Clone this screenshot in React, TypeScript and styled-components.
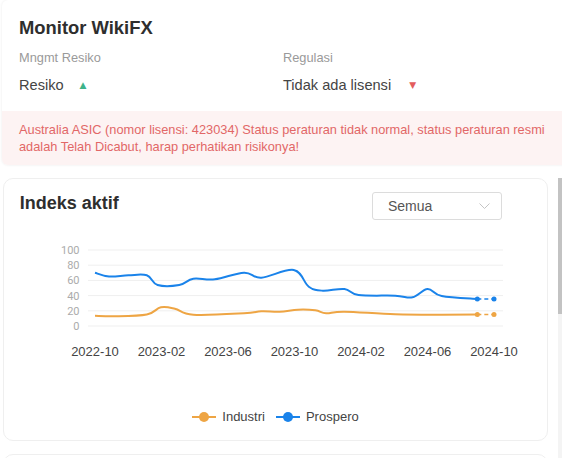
import styled, { createGlobalStyle } from 'styled-components';

const GlobalStyle = createGlobalStyle`
  html, body {
    margin: 0;
    padding: 0;
    background: #fff;
    overflow: hidden;
  }
  body {
    font-family: "Liberation Sans", Arial, sans-serif;
    color: #333;
  }
`;

type Pt = [number, number];

// the svg sits at page x 4, y 236; points below are in page coords
const OX = 4;
const OY = 236;
const sx = (x: number) => 95 + (x - 89) * 1.08;

const blueRaw: Pt[] = [
  [89, 272.7], [102, 276.5], [120, 275.3], [137, 275.3], [147, 285], [167, 285],
  [180, 278.7], [200, 279.3], [227, 272.7], [243, 277.7], [273, 270], [287, 286.7],
  [300, 290.7], [320, 289], [333, 295], [367, 295.7], [383, 297.3], [397, 289],
  [410, 296], [443, 299],
];

const orangeRaw: Pt[] = [
  [89, 315.7], [107, 316.3], [137, 314.5], [150, 307.3], [163, 308.7], [180, 314.7],
  [227, 313.3], [243, 311.3], [260, 311.7], [277, 309.7], [293, 310.3], [303, 313.3],
  [320, 311.7], [367, 314.3], [410, 314.7], [443, 314.5],
];

const blue = blueRaw.map(([x, y]) => [sx(x), y] as Pt);
const orange = orangeRaw.map(([x, y]) => [sx(x), y] as Pt);

const yTicks = [100, 80, 60, 40, 20, 0];
const xLabels = ['2022-10', '2023-02', '2023-06', '2023-10', '2024-02', '2024-06', '2024-10'];
const DASH_END = 494;

function smoothPath(pts: Pt[]) {
  const p = pts.map(([x, y]) => [x - OX, y - OY] as Pt);
  let d = `M${p[0][0].toFixed(1)},${p[0][1]}`;
  for (let i = 0; i < p.length - 1; i++) {
    const p0 = p[i - 1] || p[i];
    const p1 = p[i];
    const p2 = p[i + 1];
    const p3 = p[i + 2] || p2;
    const t = 0.18;
    const c1: Pt = [p1[0] + (p2[0] - p0[0]) * t, p1[1] + (p2[1] - p0[1]) * t];
    const c2: Pt = [p2[0] - (p3[0] - p1[0]) * t, p2[1] - (p3[1] - p1[1]) * t];
    d += ` C${c1[0].toFixed(1)},${c1[1].toFixed(1)} ${c2[0].toFixed(1)},${c2[1].toFixed(1)} ${p2[0].toFixed(1)},${p2[1]}`;
  }
  return d;
}

const BLUE = '#1a83ea';
const ORANGE = '#eea544';

function Series({ pts, color }: { pts: Pt[]; color: string }) {
  const last = pts[pts.length - 1];
  const lx = last[0] - OX;
  const ly = last[1] - OY;
  const ex = DASH_END - OX;
  return (
    <g>
      <path d={smoothPath(pts)} fill="none" stroke={color} strokeWidth={2} strokeLinejoin="round" />
      <line x1={lx} y1={ly} x2={ex} y2={ly} stroke={color} strokeWidth={1.6} strokeDasharray="4 3" />
      <circle cx={lx} cy={ly} r={2.5} fill={color} />
      <circle cx={ex} cy={ly} r={2.5} fill={color} />
    </g>
  );
}

function Chart() {
  return (
    <ChartSvg width={545} height={130} viewBox="0 0 545 130">
      {yTicks.map((v) => {
        const y = 326 - v * 0.76 - OY;
        return (
          <g key={v}>
            <line x1={88 - OX} y1={y} x2={503 - OX} y2={y} stroke="#efefef" strokeWidth={1} />
            <AxisText x={79.5 - OX} y={y + 4} textAnchor="end">{v}</AxisText>
          </g>
        );
      })}
      <Series pts={orange} color={ORANGE} />
      <Series pts={blue} color={BLUE} />
      {xLabels.map((label, i) => (
        <DateText key={label} x={95 + i * 66.5 - OX} y={356.4 - OY} textAnchor="middle">
          {label}
        </DateText>
      ))}
    </ChartSvg>
  );
}

function LegendIcon({ color }: { color: string }) {
  return (
    <svg width="24" height="12" viewBox="0 0 24 12">
      <line x1="0" y1="6" x2="24" y2="6" stroke={color} strokeWidth="2" />
      <circle cx="12" cy="6" r="5" fill={color} />
    </svg>
  );
}

export default function App() {
  return (
    <>
      <GlobalStyle />
      <Page>
        <TopCard>
          <Header>
            <Title>Monitor WikiFX</Title>
            <InfoGrid>
              <InfoCol>
                <InfoLabel>Mngmt Resiko</InfoLabel>
                <InfoValue>
                  Resiko<Arrow $up>▲</Arrow>
                </InfoValue>
              </InfoCol>
              <InfoCol>
                <InfoLabel>Regulasi</InfoLabel>
                <InfoValue>
                  Tidak ada lisensi<Arrow>▼</Arrow>
                </InfoValue>
              </InfoCol>
            </InfoGrid>
          </Header>
          <Alert>
            Australia ASIC (nomor lisensi: 423034) Status peraturan tidak normal, status peraturan resmi
            adalah Telah Dicabut, harap perhatikan risikonya!
          </Alert>
        </TopCard>
        <ScrollArea>
          <ScrollContent>
            <Card>
              <CardHead>
                <CardTitle>Indeks aktif</CardTitle>
                <Select>
                  <span>Semua</span>
                  <svg width="11" height="6" viewBox="0 0 11 6">
                    <path d="M0.5 0.5l5 5 5-5" fill="none" stroke="#c4c4c4" strokeWidth="1" />
                  </svg>
                </Select>
              </CardHead>
              <Chart />
              <Legend>
                <LegendItem>
                  <LegendIcon color={ORANGE} />
                  Industri
                </LegendItem>
                <LegendItem>
                  <LegendIcon color={BLUE} />
                  Prospero
                </LegendItem>
              </Legend>
            </Card>
            <NextCard />
          </ScrollContent>
          <ScrollRail>
            <ScrollThumb />
          </ScrollRail>
        </ScrollArea>
      </Page>
    </>
  );
}

const Page = styled.div`
  width: 562px;
  height: 458px;
  overflow: hidden;
  display: flex;
  flex-direction: column;
`;

const TopCard = styled.div`
  margin-left: 2px;
  width: 570px;
  border-radius: 6px;
  background: #fff;
  box-shadow: 0 0 3px rgba(0, 0, 0, 0.08);
  overflow: hidden;
  flex-shrink: 0;
`;

const Header = styled.div`
  padding: 15px 17px 15px;
`;

const Title = styled.div`
  font-size: 18.4px;
  line-height: 26px;
  font-weight: 700;
  color: #2e2e2e;
`;

const InfoGrid = styled.div`
  display: grid;
  grid-template-columns: 264px 1fr;
  margin-top: 9px;
`;

const InfoCol = styled.div`
  display: flex;
  flex-direction: column;
  gap: 8px;
`;

const InfoLabel = styled.div`
  font-size: 12.8px;
  line-height: 16px;
  color: #9a9a9a;
`;

const InfoValue = styled.div`
  font-size: 14.6px;
  line-height: 22px;
  color: #444;
`;

const Arrow = styled.span<{ $up?: boolean }>`
  display: inline-block;
  font-family: "DejaVu Sans", sans-serif;
  font-size: 9px;
  margin-left: ${(p) => (p.$up ? '16px' : '18px')};
  vertical-align: 2px;
  color: ${(p) => (p.$up ? '#3db38a' : '#e35d5d')};
`;

const Alert = styled.div`
  background: #fdf3f3;
  color: #e26767;
  font-size: 12.8px;
  line-height: 17.4px;
  padding: 9.6px 17px 9.6px;
`;

const ScrollArea = styled.div`
  margin-top: 13px;
  flex: 1;
  min-height: 0;
  display: flex;
`;

const ScrollContent = styled.div`
  flex: 1;
  overflow: hidden;
  padding: 0 10px 0 3px;
`;

const ScrollRail = styled.div`
  width: 4px;
  background: #f4f4f4;
  flex-shrink: 0;
`;

const ScrollThumb = styled.div`
  height: 136px;
  background: #c3c3c3;
`;

const Card = styled.div`
  height: 263px;
  box-sizing: border-box;
  border: 1px solid #efefef;
  border-radius: 10px;
  background: #fff;
  display: flex;
  flex-direction: column;
`;

const CardHead = styled.div`
  display: flex;
  justify-content: space-between;
  align-items: flex-start;
  box-sizing: border-box;
  padding: 11px 45px 0 15.7px;
  height: 57px;
  flex-shrink: 0;
`;

const CardTitle = styled.div`
  font-size: 18px;
  font-weight: 700;
  line-height: 26px;
  color: #2e2e2e;
`;

const Select = styled.div`
  margin-top: 2px;
  width: 130px;
  height: 28px;
  box-sizing: border-box;
  border: 1px solid #dcdcdc;
  border-radius: 3px;
  display: flex;
  align-items: center;
  justify-content: space-between;
  padding: 0 11px 0 15px;
  font-size: 14px;
  color: #555;
`;

const ChartSvg = styled.svg`
  display: block;
  flex-shrink: 0;
`;

const AxisText = styled.text`
  font-family: Roboto, sans-serif;
  font-size: 11px;
  fill: #ababab;
`;

const DateText = styled.text`
  font-family: "Liberation Sans", Arial, sans-serif;
  font-size: 13px;
  fill: #444;
`;

const Legend = styled.div`
  margin-top: 43px;
  display: flex;
  justify-content: center;
  gap: 11px;
`;

const LegendItem = styled.div`
  display: flex;
  align-items: center;
  gap: 6px;
  font-size: 13px;
  line-height: 15px;
  color: #444;
`;

const NextCard = styled.div`
  margin-top: 13px;
  height: 150px;
  border: 1px solid #efefef;
  border-radius: 10px;
`;
